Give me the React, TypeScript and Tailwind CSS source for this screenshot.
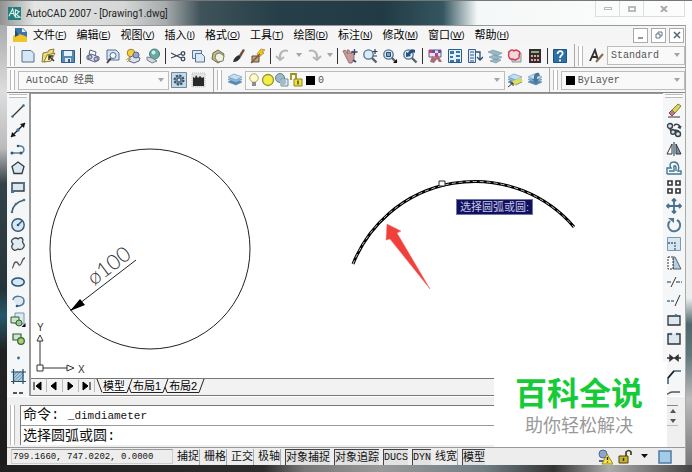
import type { ReactNode } from 'react'

const ui = "font-['Liberation_Sans','Noto_Sans_CJK_SC',sans-serif]"
const mono = "font-['Liberation_Mono','Noto_Sans_CJK_SC',monospace]"

const page = <path d="M2 2.500h9l3 3v8.500H2z" fill="#d5e6f5" stroke="#55708c" />
const sheets = (
  <g stroke="#5a8fb5" strokeWidth=".6">
    <path d="M1 10l6-3 8 3-6 3z" fill="#4f86b0" />
    <path d="M1 7.500l6-3 8 3-6 3z" fill="#8fbbd9" />
    <path d="M1 5l6-3 8 3-6 3z" fill="#c4dff0" />
  </g>
)
const glass = (
  <g>
    <path d="M9.500 9.500l5 5" stroke="#59636e" strokeWidth="2.400" />
    <circle cx="6.500" cy="6.500" r="4.700" fill="#d8ecfa" stroke="#54708a" strokeWidth="1.300" />
  </g>
)

const icons: Record<string, ReactNode> = {
  dwg: <g><path d="M3 1h8l4 4v6H3z" fill="#3f74a8" /><path d="M10 1l4 4h-4z" fill="#e8f2fa" /><path d="M1 9c4-3 9-2 14 1v5H1z" fill="#f0c528" /><path d="M3 3l4 5-4 2z" fill="#1d4f80" /></g>,
  fresh: page,
  open: <g><path d="M2 14l1-9 5-1 1-2 5-1-3 12z" fill="#eadb7b" stroke="#8b8138" /><path d="M4 14l3-7 8-2-4 8z" fill="#fff3a5" stroke="#8b8138" /><path d="M9 8l5 5M9 12V8h4" stroke="#333" strokeWidth="1.500" fill="none" /></g>,
  save: <g><path d="M1.500 2.500h13v12h-13z" fill="#548bb5" stroke="#2f5f88" /><path d="M4 3h8v5H4z" fill="#e5f0f8" /><path d="M5 10h6v4H5z" fill="#dce5ec" /><path d="M8 11h2v3H8z" fill="#2f5f88" /></g>,
  print: <g fill="#e4e8f0" stroke="#5a5f85"><path d="M5 2l6 2-1 4-6-2z" fill="#fff" /><path d="M2 8l4-2 8 3v3l-4 2-8-3z" /><circle cx="5" cy="9" r="2" fill="#b9bedb" /><circle cx="11" cy="11" r="2" fill="#b9bedb" /></g>,
  preview: <g><path d="M2 2h9l3 3v7H2z" fill="#d3e5f5" stroke="#54708a" /><path d="M6 10l-4 5" stroke="#444" strokeWidth="2" /><circle cx="8" cy="7.500" r="3" fill="#f1f8fd" stroke="#54708a" /></g>,
  publish: <g stroke="#5d6289"><circle cx="6" cy="5" r="3.800" fill="#f2cf45" stroke="#a78112" /><path d="M4 10l5-3 6 3-1 3-5 2-5-2z" fill="#dde1ed" /><circle cx="11" cy="7" r="3" fill="#96a7c9" /><path d="M1 12l4-3M2 14l4-3" stroke="#c49a23" /></g>,
  dwf: <g><circle cx="9.500" cy="6" r="5" fill="#69aaa0" stroke="#427c82" /><circle cx="8.500" cy="4.500" r="2" fill="#d5eee5" /><path d="M2 9l5 1 5 3-5 2-5-3z" fill="#cfd8df" stroke="#78848f" /></g>,
  cut: <g stroke="#3c4b58" fill="none" strokeWidth="1.300"><path d="M1 5l10 5M1 10l10-4" /><circle cx="13" cy="5.500" r="1.800" /><circle cx="13" cy="11" r="1.800" /></g>,
  copy: <g fill="#dbe9f6" stroke="#58748f"><path d="M2.500 2.500h9v8h-9z" /><path d="M5.500 5.500h6l3 3v5.500h-9z" /></g>,
  paste: <g><path d="M3 5l5-3 6 4-1 6-5 3-6-4z" fill="#c6bb84" stroke="#6b6b45" /><path d="M6 6l4-1 4 3-1 5-5 1-3-4z" fill="#eef1e4" stroke="#75836b" /></g>,
  brush: <g><path d="M9 7l4-6 2 1-4 7z" fill="#6d5240" /><path d="M3 14c1-4 3-6 6-7l2 2c-2 3-4 5-8 5z" fill="#332d2b" /></g>,
  block: <g><path d="M7 6l4-5 4 1-3 2 2 1-5 4z" fill="#f2c421" stroke="#aa8020" strokeWidth=".7" /><path d="M2 8h7v6H2z" fill="#c2a27e" stroke="#5d4a3f" /><path d="M1 15l9-9" stroke="#815638" strokeWidth="1.500" /></g>,
  undo: <path d="M13 3C8 1 4 5 5 11M1 8l4 4 4-3" fill="none" stroke="#b5b5b5" strokeWidth="2" />,
  redo: <path d="M3 3c5-2 9 2 8 8M7 9l4 3 4-4" fill="none" stroke="#b5b5b5" strokeWidth="2" />,
  pan: <g><path d="M1 3l2-1 3 4-1-4 2 0 2 4 1-3 2 1 0 7-2 4H7z" fill="#c99a98" stroke="#87605f" strokeWidth=".8" /><path d="M12.500 1v6M9.500 4h6" stroke="#304b70" strokeWidth="1.300" /><path d="M11 12l3 2" stroke="#304b70" strokeWidth="2" /></g>,
  zoom: <g>{glass}<path d="M13 1v5M10.500 3.500h5M11 8h4" stroke="#2d4258" strokeWidth="1.200" /></g>,
  zoomWindow: <g>{glass}<path d="M4.500 4.500h4v4h-4z" fill="#7ba5c8" stroke="#284c70" /><path d="M15 11v4h-4z" fill="#111" /></g>,
  zoomPrev: <g>{glass}<path d="M13 2C9 0 7 3 6 5L4 4v5l5-1-1-1c1-2 3-3 5-2z" fill="#294f80" /></g>,
  properties: <g><path d="M2 2h12v7H2z" fill="#e9e2ee" stroke="#6b5480" /><path d="M2 2h3v3H2zM8 5h3v4H8z" fill="#c93d7e" /><path d="M5 2h3v3H5zM11 2h3v3h-3z" fill="#4e58ac" /><path d="M3 14l2-6 3 2 3-3 4 7h-3l-2-3-3 4z" fill="#a46e75" /></g>,
  design: <g><path d="M1.500 1.500h13v13h-13z" fill="#e4f1fa" stroke="#285d88" /><path d="M3 3h4v3H3zM9 3h4v2H9zM9 7h4v2H9zM3 8h3v2H3zM3 12h4v2H3zM9 11h4v3H9z" fill="#3a75a5" /></g>,
  palettes: <g><path d="M1.500 1.500h7v13h-7z" fill="#dcebf7" stroke="#3b5f88" /><path d="M3 4h4M3 7h4M3 10h4M3 13h4" stroke="#3b5f88" /><path d="M9 4h4v7M10 9l3 3 3-3" fill="none" stroke="#294d78" strokeWidth="1.300" /></g>,
  markup: <g><path d="M1 4l5-2 9 3-5 3zM2 9l5-2 8 2-6 3zM3 13l5-2 6 1-5 3z" fill="#98b8c6" stroke="#799aa9" strokeWidth=".7" /></g>,
  cloud: <g><path d="M5 5h9v9H5z" fill="#d6dadd" stroke="#8d9297" /><path d="M3 3q2-2 4 0q2-2 4 0q3 1 1 4q1 3-2 4q-2 2-4 0q-3 1-4-2q-1-2 0-3q-1-2 1-3z" fill="#f7d6db" stroke="#ce4057" strokeWidth="1.400" /></g>,
  calc: <g><path d="M2 1h12v14H2z" fill="#382b2d" /><path d="M4 3h8v2H4z" fill="#80b67b" /><path d="M4 7h2v2H4zM7 7h2v2H7zM10 7h2v2h-2zM4 11h2v2H4zM7 11h2v2H7zM10 11h2v2h-2z" fill="#dfa4a0" /></g>,
  help: <g><path d="M1.500 1.500h13v13h-13z" fill="#2e70a6" stroke="#1d5380" /><path d="M5.500 6c0-4 6-3.500 5 0c-.5 1.500-2.500 1.500-2.500 4M8 11.500v2" fill="none" stroke="#fff" strokeWidth="1.800" /></g>,
  style: <g fill="none" stroke="#2f2f2f" strokeWidth="1.800"><path d="M2 13L7 2l3 10M4 9h5" /><path d="M8 14l7-8" stroke="#8a6a4f" strokeWidth="2" /></g>,
  gear: <g><path d="M.5.5h15v15H.5z" fill="#c5d9e8" stroke="#72899c" /><circle cx="8" cy="8" r="4.500" fill="#7895ac" stroke="#314a60" strokeWidth="2" strokeDasharray="2 1.500" /><circle cx="8" cy="8" r="2" fill="#d7e6f1" stroke="#314a60" /></g>,
  space: <g><path d="M1 1h13v14H1z" fill="#e2e2e2" stroke="#bbb" strokeDasharray="1 1" /><path d="M2 14V5l2 1 1-3 2 3 2-2 2 2 2-1v9z" fill="#292929" /></g>,
  layers: sheets,
  bulb: <g><circle cx="8" cy="6" r="4.200" fill="#fffbd0" stroke="#b3a75c" /><path d="M6 10h4v4H6z" fill="#8d8d8d" /></g>,
  sun: <circle cx="8" cy="8" r="5.500" fill="#f4ed43" stroke="#8f9432" strokeWidth="1.300" />,
  freeze: <g><circle cx="6" cy="6" r="4.500" fill="#9db8c7" stroke="#63808f" /><path d="M7 7h7v7H7z" fill="#dde9ef" stroke="#718d9b" /><circle cx="9" cy="10" r="3" fill="#a2bcc9" /></g>,
  lock: <g><path d="M3 8V2h5v6" fill="none" stroke="#999020" strokeWidth="1.800" /><path d="M6 7h8v7H6z" fill="#ece145" stroke="#8c8520" /><path d="M10 8.500v4" stroke="#555018" strokeWidth="1.500" /></g>,
  layerCur: <g>{sheets}<path d="M4 10l9-4 3 3-8 4z" fill="#e5dc51" /><path d="M1 15l5-4M3 11h3v3" stroke="#333" fill="none" /></g>,
  layerPrev: <g>{sheets}<path d="M12 1C7 0 7 4 7 7H5l4 5 3-5h-2c0-2 0-3 3-3z" fill="#4c7398" /></g>,
  line: <g><path d="M2 14L14 2" stroke="#333" strokeWidth="1.300" /><circle cx="2.500" cy="13.500" r="1.300" fill="#42759d" /><circle cx="13.500" cy="2.500" r="1.300" fill="#42759d" /></g>,
  xline: <g><path d="M1 15L15 1" stroke="#111" strokeWidth="1.300" /><path d="M1 15l1-5 4 4zM15 1l-5 1 4 4z" fill="#111" /><circle cx="8" cy="8" r="1.700" fill="#42759d" /></g>,
  pline: <g><path d="M2 12h9c4 0 4-7-1-7H8" fill="none" stroke="#56819f" strokeWidth="1.500" /><circle cx="2" cy="12" r="1.500" fill="#2f5878" /><circle cx="11" cy="12" r="1.500" fill="#2f5878" /><circle cx="8" cy="5" r="1.300" fill="#2f5878" /></g>,
  polygon: <path d="M8 2l6 4.500-2 7H4l-2-7z" fill="#dbe8f0" stroke="#303c45" strokeWidth="1.300" />,
  rect: <g><path d="M2 4h12v8H2z" fill="#dbe7f0" stroke="#303c45" strokeWidth="1.400" /><path d="M1 11h3v3H1zM12 3h3v2h-3z" fill="#42759d" /></g>,
  arc: <g><path d="M2 14Q3 5 14 2" fill="none" stroke="#3c5569" strokeWidth="1.400" /><circle cx="2" cy="14" r="1.300" fill="#42759d" /><circle cx="6" cy="6" r="1.300" fill="#42759d" /><circle cx="14" cy="2" r="1.300" fill="#42759d" /></g>,
  circle: <g><circle cx="8" cy="8" r="6.200" fill="#d5e8f3" stroke="#315775" strokeWidth="1.400" /><path d="M8 8l4-4" stroke="#315775" strokeWidth="1.500" /><circle cx="8" cy="8" r="1.300" fill="#315775" /></g>,
  revcloud: <path d="M3 3q3-2 5 0q4-3 5 1q-1 2 0 3q3 3-1 6q-3 1-4 0q-4 3-6-1q-1-2 1-4q-3-3 0-5z" fill="#e2ebf1" stroke="#3b4750" strokeWidth="1.300" />,
  spline: <path d="M2 13c2 0 1-6 4-6s2 4 4 3 2-7 5-7" fill="none" stroke="#555" strokeWidth="1.300" />,
  ellipse: <ellipse cx="8" cy="8" rx="6.200" ry="4" fill="#d5e8f3" stroke="#285174" strokeWidth="1.500" />,
  ellarc: <g><path d="M3 7C3 2 14 2 14 8c0 4-4 5-7 5" fill="#dce9f3" stroke="#4c789c" strokeWidth="1.500" /><circle cx="7" cy="13" r="1.300" fill="#2f5878" /></g>,
  insert: <g><path d="M5 1h9v11H5z" fill="#dceaf2" stroke="#7796a8" /><path d="M1 5h8v6H1z" fill="#cfe7c4" stroke="#335d41" /><circle cx="9" cy="11" r="3" fill="#9ec98d" stroke="#335d41" /><path d="M15.500 11v4h-4z" fill="#111" /></g>,
  makeblock: <g stroke="#335d41" strokeWidth="1.200"><path d="M3 3h8v6H3z" fill="#cfe7c4" /><circle cx="11" cy="10" r="3.300" fill="#a9d26b" /></g>,
  point: <circle cx="8.500" cy="8" r="1.400" fill="#356b94" />,
  hatch: <g><path d="M3.500 2.500h10v10h-10z" fill="#a8cbdc" /><path d="M4 6l4-4M4 9l7-7M4 12l10-9M7 13l7-7" stroke="#5c8ba6" strokeWidth=".8" /><path d="M3.500 0v15M13 0v15M1 3h15M1 12.500h15" stroke="#294f6d" strokeWidth="1.200" /></g>,
  dashes: <path d="M3 5h4M9 5h4" stroke="#555" strokeWidth="2" />,
  erase: <g><path d="M2 14h12" stroke="#333" /><path d="M3 10l3 3 3-3-3-3z" fill="#c97583" stroke="#824b52" /><path d="M6 7l6-6 3 2-6 7z" fill="#ded65c" stroke="#847d2e" /></g>,
  copyObj: <g fill="#d8e3e9" stroke="#36424b" strokeWidth="1.400"><circle cx="4" cy="4" r="2.500" /><path d="M4 7c0 2 4 2 3 0M8 4c1-3 6-2 6 2l-2-1M14 6l1-2" fill="none" /><circle cx="7" cy="10" r="2.300" /><circle cx="12" cy="12" r="2.500" /><path d="M9 8l4 1" fill="none" /></g>,
  mirror: <g><path d="M6 3v10H1z" fill="#fff" stroke="#333" /><path d="M10 3v10h5z" fill="#7892a2" stroke="#333" /><path d="M8 1v14" stroke="#345f80" strokeWidth="1.300" /></g>,
  offset: <g fill="none" stroke="#467991" strokeWidth="1.400"><path d="M1 14h14v-3h-3c2-4 0-9-4-9S3 5 5 8H1v6" /><path d="M3 11h5V8c-1-3 2-3 2 0v3" /></g>,
  array: <path d="M2 2h4v4H2zM10 2h4v4h-4zM2 10h4v4H2zM10 10h4v4h-4z" fill="#fff" stroke="#333" strokeWidth="1.600" />,
  move: <path d="M8 1v14M1 8h14M6 3l2-2 2 2M6 13l2 2 2-2M3 6L1 8l2 2M13 6l2 2-2 2" fill="none" stroke="#47718f" strokeWidth="1.800" />,
  rotate: <g><path d="M4 4a6 6 0 1 0 7-1" fill="none" stroke="#4e7894" strokeWidth="2" /><path d="M2 1h6v5z" fill="#4e7894" /></g>,
  scale: <g><path d="M1.500 1.500h13v13h-13z" fill="#d7e7f1" stroke="#7b9bad" /><path d="M2 7h7v7" fill="none" stroke="#4b6270" strokeDasharray="2 1" strokeWidth="1.300" /></g>,
  stretch: <g><path d="M7 2h2l6 12H7z" fill="#b7cddd" stroke="#4f6573" /><path d="M2 2h5v12H2z" fill="#fff" stroke="#333" strokeDasharray="2 1" /></g>,
  trim: <g><path d="M1 8h5M10 8h6" stroke="#527a96" strokeWidth="1.300" strokeDasharray="4 1" /><path d="M5 13l5-10" stroke="#333" /></g>,
  extend: <g><path d="M1 8h8" stroke="#527a96" strokeDasharray="3 1" strokeWidth="1.500" /><path d="M9 13l5-11" stroke="#333" /></g>,
  breakPt: <g><path d="M2 4h12v9H2z" fill="#dbe8f2" stroke="#333" strokeWidth="1.300" /><circle cx="10" cy="3.500" r="1.500" fill="#416e8c" /></g>,
  breakObj: <g><path d="M5 3H2v10h12V3h-3" fill="#dbe8f2" stroke="#333" strokeWidth="1.400" /><circle cx="5" cy="3" r="1.300" fill="#416e8c" /><circle cx="11" cy="3" r="1.300" fill="#416e8c" /></g>,
  join: <path d="M1 8h14M4 5.500L7 8l-3 2.500zM12 5.500L9 8l3 2.500z" fill="#333" stroke="#333" strokeWidth="1.500" />,
  chamfer: <g><path d="M2 15V9l6-7h7" fill="none" stroke="#416780" strokeWidth="1.600" /><path d="M2 9l6-7" stroke="#222" strokeWidth="1.600" /></g>,
  fillet: <path d="M1 6c2 0 2-2 6-2h7" fill="none" stroke="#555" strokeWidth="1.500" />,
  alert: <g><circle cx="6" cy="5" r="4" fill="#8ba7d0" stroke="#52658c" /><path d="M2 12h6" stroke="#52658c" strokeWidth="2" /><path d="M10 5l6 10H5z" fill="#f7e44b" stroke="#99851e" /><path d="M10.500 8v3M10.500 12.500v1" stroke="#222" strokeWidth="1.400" /></g>,
  padlock: <g><path d="M9 8V3q3-3 5 0v3" fill="none" stroke="#443f18" strokeWidth="1.700" /><path d="M2 7h9v7H2z" fill="#c9b229" stroke="#4c4313" /><path d="M6.500 9v3" stroke="#332d0c" strokeWidth="1.500" /></g>,
  clean: <path d="M2 2h12v12H2z" fill="#a4cbe8" stroke="#4c7ca3" strokeWidth="1.500" />,
}

function Icon({ name }: { name: string }) {
  return <svg viewBox="0 0 16 16" fill="none" className="h-4 w-4 shrink-0" aria-hidden="true">{icons[name]}</svg>
}

function Tool({ name }: { name: string }) {
  return (
    <button aria-label={name} className="flex h-[19px] w-5 shrink-0 items-center justify-center">
      <Icon name={name} />
    </button>
  )
}

function Tools({ names }: { names: string[] }) {
  return <div className="flex shrink-0">{names.map((n) => <Tool key={n} name={n} />)}</div>
}

function Sep() {
  return <div className="flex w-[5px] shrink-0 justify-center"><div className="h-4 w-px bg-[#333]" /></div>
}

function Grip() {
  return <div className="mx-[3px] h-5 w-[5px] shrink-0 border-x border-[#b9b9b9] bg-white" />
}

function Caret() {
  return <svg viewBox="0 0 8 5" className="h-[5px] w-2 shrink-0" aria-hidden="true"><path d="M1 0h6L4 4z" fill="#a5a5a5" /></svg>
}

interface ComboProps {
  label: string
  value: string
  className: string
  children?: ReactNode
}

function Combo({ label, value, className, children }: ComboProps) {
  return (
    <label className={`flex h-[19px] items-center border border-[#bdbdbd] bg-[#f9f9f9] pr-[3px] ${className}`}>
      {children}
      <select aria-label={label} className={`${mono} min-w-0 flex-1 appearance-none text-[10px] text-[#555] outline-none`}>
        <option>{value}</option>
      </select>
      <Caret />
    </label>
  )
}

const menus = [
  ['文件', 'F'], ['编辑', 'E'], ['视图', 'V'], ['插入', 'I'], ['格式', 'O'], ['工具', 'T'],
  ['绘图', 'D'], ['标注', 'N'], ['修改', 'M'], ['窗口', 'W'], ['帮助', 'H'],
]

const drawTools = ['line', 'xline', 'pline', 'polygon', 'rect', 'arc', 'circle', 'revcloud', 'spline', 'ellipse', 'ellarc', 'insert', 'makeblock', 'point', 'hatch', 'dashes']
const modifyTools = ['erase', 'copyObj', 'mirror', 'offset', 'array', 'move', 'rotate', 'scale', 'stretch', 'trim', 'extend', 'breakPt', 'breakObj', 'join', 'chamfer', 'fillet']

const modes = [
  { name: '捕捉', on: false }, { name: '栅格', on: false }, { name: '正交', on: false }, { name: '极轴', on: false },
  { name: '对象捕捉', on: true }, { name: '对象追踪', on: true }, { name: 'DUCS', on: true, latin: true }, { name: 'DYN', on: true, latin: true },
  { name: '线宽', on: false }, { name: '模型', on: true },
]

function TitleBar() {
  return (
    <header className="flex h-[25px] shrink-0 items-center border-t border-[#777] bg-[linear-gradient(90deg,#909292_0%,#e4e5e5_5%,#d5d6d6_18%,#a5aaab_24%,#40535a_29%,#263f48_40%,#213a43_55%,#345660_64%,#f5f8f8_69%,#fdfdfd_100%)] pl-2">
      <svg viewBox="0 0 14 14" className="h-[13px] w-[13px]" aria-hidden="true">
        <path d="M0 0h14v14H0z" fill="#247e7c" />
        <path d="M1 10l4-8 2 8M3 7h4M8 3l4 2-3 3 4 3H8z" fill="none" stroke="#d7f0e8" strokeWidth="1.200" />
      </svg>
      <h1 className="ml-[5px] flex-1 font-['Roboto',sans-serif] text-[10px] text-[#222]">AutoCAD 2007 - [Drawing1.dwg]</h1>
      <div className="mr-[7px] flex h-4 self-start border border-t-0 border-[#ddd] text-[#999]">
        <button aria-label="最小化" className="flex w-6 items-center justify-center border-r border-[#ddd]"><span className="h-[3px] w-2 border border-[#bbb]" /></button>
        <button aria-label="还原" className="flex w-6 items-center justify-center border-r border-[#ddd]"><span className="h-[6px] w-2 border-2 border-[#bbb]" /></button>
        <button aria-label="关闭" className="flex w-10 items-center justify-center"><svg viewBox="0 0 8 6" className="h-[6px] w-2"><path d="M1 0l6 6M7 0L1 6" stroke="#aaa" strokeWidth="2" /></svg></button>
      </div>
    </header>
  )
}

function MenuBar() {
  const box = 'flex h-[15px] w-[15px] items-center justify-center border border-[#aaa] bg-white'
  return (
    <nav className="flex h-[19px] shrink-0 items-center border-t border-[#999] bg-[#f5f5f5] pl-[5px] pr-px">
      <Icon name="dwg" />
      <div className="ml-[5px] flex flex-1 gap-[10px]">
        {menus.map(([name, key]) => (
          <button key={key} className={`${ui} flex items-center whitespace-nowrap text-[11px] leading-4 text-black`}>
            {name}<span className="text-[9px]">(<u>{key}</u>)</span>
          </button>
        ))}
      </div>
      <div className="flex gap-[3px]">
        <button aria-label="最小化文档" className={box}><svg viewBox="0 0 8 8" className="h-2 w-2"><path d="M1 7h5" stroke="#667788" strokeWidth="1.500" /></svg></button>
        <button aria-label="还原文档" className={box}><svg viewBox="0 0 8 8" className="h-2 w-2" fill="none"><path d="M3 3V1h4v4H5M1 3h4v4H1z" stroke="#667788" /></svg></button>
        <button aria-label="关闭文档" className={box}><svg viewBox="0 0 8 8" className="h-2 w-2"><path d="M1 1l6 6M7 1L1 7" stroke="#556677" strokeWidth="1.500" /></svg></button>
      </div>
    </nav>
  )
}

function StandardBar() {
  return (
    <div className="flex h-6 shrink-0 items-center border-b border-[#999] bg-[#f6f6f6]">
      <Grip />
      <Tools names={['fresh', 'open', 'save']} />
      <Sep />
      <Tools names={['print', 'preview', 'publish', 'dwf']} />
      <Sep />
      <Tools names={['cut', 'copy', 'paste', 'brush', 'block']} />
      <Sep />
      <Tool name="undo" />
      <div className="flex w-[11px] justify-center"><Caret /></div>
      <Tool name="redo" />
      <div className="flex w-[11px] justify-center"><Caret /></div>
      <Sep />
      <Tools names={['pan', 'zoom', 'zoomWindow', 'zoomPrev']} />
      <Sep />
      <Tools names={['properties', 'design', 'palettes', 'markup', 'cloud', 'calc']} />
      <Sep />
      <Tool name="help" />
      <div className="ml-1 h-full border-l border-[#aaa]" />
      <Grip />
      <Tool name="style" />
      <Combo label="文字样式" value="Standard" className="ml-px flex-1 pl-[3px]" />
    </div>
  )
}

function LayerBar() {
  return (
    <div className="flex h-6 shrink-0 items-center bg-[#f6f6f6]">
      <Grip />
      <Combo label="工作空间" value="AutoCAD 经典" className="w-[151px] pl-[7px]" />
      <Tools names={['gear', 'space']} />
      <div className="ml-1 h-full border-l border-[#aaa]" />
      <Grip />
      <Tool name="layers" />
      <Combo label="图层" value="0" className="flex-[11] pl-px">
        {['bulb', 'sun', 'freeze', 'lock'].map((n) => <span key={n} className="flex w-[14px] justify-center"><Icon name={n} /></span>)}
        <span className="mx-[3px] h-[9px] w-[9px] bg-black" />
      </Combo>
      <Tools names={['layerCur', 'layerPrev']} />
      <div className="ml-1 h-full border-l border-[#aaa]" />
      <Grip />
      <Combo label="颜色" value="ByLayer" className="flex-[5] gap-[3px] pl-1">
        <span className="h-[9px] w-[9px] bg-black" />
      </Combo>
    </div>
  )
}

function SideBar({ names }: { names: string[] }) {
  return (
    <aside className="flex w-[22px] shrink-0 flex-col items-center overflow-hidden bg-[#f5f6f7] pt-px">
      <div className="mb-[3px] h-1 w-[18px] shrink-0 border-y border-[#bbb] bg-white" />
      {names.map((n) => <Tool key={n} name={n} />)}
    </aside>
  )
}

function Drawing() {
  return (
    <div className="relative min-h-0 flex-1 overflow-hidden bg-white">
      <svg width="632" height="284" viewBox="31 94 632 284" fill="none" stroke="#222" role="img" aria-label="Drawing1">
        <circle cx="150" cy="249" r="100" />
        <path d="M136 260L71 310" />
        <path d="M70 311l10-12 5 6z" fill="#000" stroke="none" />
        <text x="0" y="0" transform="translate(94 286) rotate(-37)" fill="#333" stroke="none" fontSize="21" fontFamily="Lato, sans-serif" fontWeight="300">ø100</text>
        <path d="M353 264A131 131 0 0 1 574 227" stroke="#000" strokeWidth="3" />
        <path d="M353 264A131 131 0 0 1 574 227" stroke="#ccc" strokeWidth="1" strokeDasharray="4 3" />
        <path d="M439 181h6v5h-6z" fill="#fff" />
        <path d="M387 224l14 7-4 2 33 56-40-50-4 1z" fill="#f0403c" stroke="#f4706c" strokeWidth=".5" />
        <path d="M40 365v-25M43 368h25" stroke="#333" />
        <path d="M37 365h6v6h-6zM37 341h6l-3-6zM67 365v6l7-3z" fill="#fff" stroke="#333" />
        <g fill="#333" stroke="none" fontSize="10" fontFamily="Liberation Sans, sans-serif">
          <text x="37" y="331">Y</text>
          <text x="78" y="373">X</text>
        </g>
      </svg>
      <div className={`${ui} absolute left-[425px] top-[105px] border border-[#7078a8] bg-[#10105f] px-[3px] text-[11px] leading-[14px] text-[#c8c8e4]`}>选择圆弧或圆:</div>
    </div>
  )
}

function Slant({ d }: { d: string }) {
  return <svg viewBox="0 0 8 14" className="h-[14px] w-2 shrink-0" fill="none" aria-hidden="true"><path d={d} stroke="#222" /></svg>
}

function SheetTabs() {
  const arrows = ['M3 2v8M10 2v8L5 6z', 'M9 2v8L4 6z', 'M5 2v8l5-4z', 'M4 2v8l5-4zM11 2v8']
  const tab = `${ui} h-[14px] border-b border-[#222] text-[11px] leading-[14px] text-black`
  return (
    <div className="flex h-[18px] shrink-0 items-start border-b border-[#777] bg-[#f2f2f2]">
      {arrows.map((d) => (
        <button key={d} aria-label="滚动布局" className="h-[14px] w-4 border-r border-t border-[#bbb] border-t-[#777]">
          <svg viewBox="0 0 14 12" className="h-3 w-[14px]"><path d={d} fill="#000" stroke="#000" /></svg>
        </button>
      ))}
      <div className="flex flex-1 border-t border-[#777]">
        <Slant d="M2 0l5 13.500" />
        <button className={`${tab} bg-white`}>模型</button>
        <Slant d="M0 13.500h2L7 0M4 8l2 5.500h2" />
        <button className={tab}>布局1</button>
        <Slant d="M0 13.500h2L7 0M4 8l2 5.500h2" />
        <button className={tab}>布局2</button>
        <Slant d="M0 13.500h2L7 0" />
      </div>
    </div>
  )
}

function CommandLine() {
  return (
    <section className="flex shrink-0 border-t border-[#fff] bg-[#efefef] pb-[2px] pt-2">
      <div className="mx-[3px] w-[5px] shrink-0 border-x border-[#b9b9b9] bg-white" />
      <div className={`${mono} ml-[2px] min-w-0 flex-1 border-l border-t border-[#777] bg-white text-[14px] leading-[18px] text-[#111]`}>
        <p className="h-5 border-b border-[#999] pl-[2px]">命令: <span className="text-[11px]">_dimdiameter</span></p>
        <label className="flex h-[19px] items-center pl-[2px]">
          选择圆弧或圆:
          <input aria-label="命令行" className="h-4 min-w-0 flex-1 outline-none" />
        </label>
      </div>
      <div className="mr-[7px] flex w-[11px] flex-col border-t border-[#888]">
        <button aria-label="向上" className="flex h-[10px] items-center justify-center"><svg viewBox="0 0 6 4" className="h-1 w-[6px]"><path d="M0 4h6L3 0z" fill="#555" /></svg></button>
        <button aria-label="向下" className="flex h-[10px] items-center justify-center border-b border-[#bbb]"><svg viewBox="0 0 6 4" className="h-1 w-[6px]"><path d="M0 0h6L3 4z" fill="#555" /></svg></button>
      </div>
    </section>
  )
}

function StatusBar() {
  return (
    <footer className="flex h-[18px] shrink-0 items-center gap-1 border-t border-[#999] bg-[#ededed] pl-1 pr-3 text-[#111]">
      <output className={`${mono} h-[15px] w-[162px] border border-[#ccc] border-t-[#999] pl-px text-[9px] leading-[14px]`}>799.1660, 747.0202, 0.0000</output>
      {modes.map((m) => (
        <button
          key={m.name}
          className={`${m.latin ? `${mono} text-[10px]` : `${ui} text-[11px]`} h-[16px] whitespace-nowrap leading-[15px] ${m.on ? 'border-l border-t border-[#444] bg-[#e2e2e2]' : 'border-r border-[#aaa]'}`}
        >
          {m.name}
        </button>
      ))}
      <div className="flex-1" />
      <Icon name="alert" />
      <Icon name="padlock" />
      <svg viewBox="0 0 8 5" className="ml-1 h-[5px] w-2"><path d="M0 0h7L3.500 4z" fill="#111" /></svg>
      <div className="ml-1 flex"><Icon name="clean" /></div>
    </footer>
  )
}

export default function App() {
  return (
    <div className="relative flex h-screen flex-col overflow-hidden">
      <TitleBar />
      <div className="flex min-h-0 flex-1">
        <div className="w-[7px] shrink-0 bg-[linear-gradient(#a9abac_0%,#ddd_15%,#bbb_28%,#344349_36%,#263439_60%,#24576b_66%,#222_74%,#1b1b1b_100%)]" />
        <main className="flex min-w-0 flex-1 flex-col">
          <MenuBar />
          <StandardBar />
          <LayerBar />
          <div className="flex min-h-0 flex-1 border-t border-[#888]">
            <SideBar names={drawTools} />
            <div className="flex min-w-0 flex-1 flex-col border-l-2 border-t border-[#999]">
              <Drawing />
              <SheetTabs />
            </div>
            <SideBar names={modifyTools} />
          </div>
          <CommandLine />
          <StatusBar />
        </main>
        <div className="w-[7px] shrink-0 border-l border-[#aaa] bg-[linear-gradient(#fbfbfb_0%,#f4f4f4_25%,#eceeee_62%,#4f686d_68%,#60777b_75%,#bbb_85%,#777_100%)]" />
      </div>
      <div className="h-[7px] shrink-0 bg-[linear-gradient(90deg,#1f1f1f_0%,#2d2d2d_38%,#777_44%,#999_55%,#707f84_70%,#333_80%,#aaa_88%,#444_100%)]" />
      <div className={`${ui} absolute bottom-[25px] right-[25px] flex w-[173px] flex-col items-center bg-white pb-[9px] pr-[3px] pt-[14px]`}>
        <strong className="text-[32px] font-bold leading-9 text-[#16cb38]">百科全说</strong>
        <span className="mt-[2px] text-[18px] leading-6 text-[#999]">助你轻松解决</span>
      </div>
    </div>
  )
}
